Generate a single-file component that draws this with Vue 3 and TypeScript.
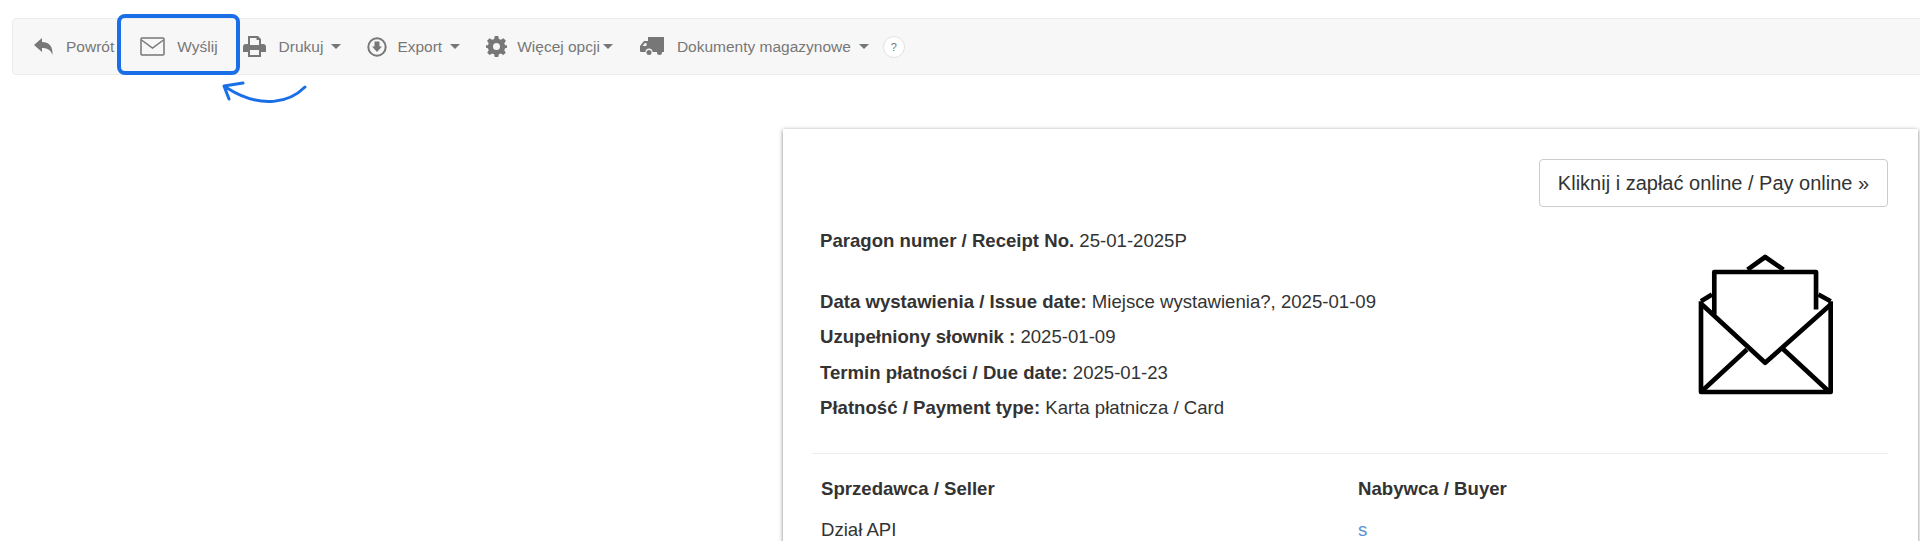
<script setup lang="ts">
interface InfoRow {
  label: string
  value: string
}

const infoRows: InfoRow[] = [
  { label: 'Data wystawienia / Issue date:', value: 'Miejsce wystawienia?, 2025-01-09' },
  { label: 'Uzupełniony słownik :', value: '2025-01-09' },
  { label: 'Termin płatności / Due date:', value: '2025-01-23' },
  { label: 'Płatność / Payment type:', value: 'Karta płatnicza / Card' },
]
</script>

<template>
  <div class="page">
    <nav class="toolbar">
      <a class="tool tool-back">
        <svg class="ico" width="19" height="19" viewBox="0 0 19 19">
          <path d="M0 8 L8 1 V5 C15 5 19 9 18.500 18 C16.500 13 14 11 8 11 V15 Z" />
        </svg>
        <span>Powrót</span>
      </a>
      <a class="tool tool-send">
        <svg class="ico" width="25" height="19" viewBox="0 0 25 19">
          <rect x="1" y="1" width="23" height="17" rx="1" fill="none" stroke="#777" stroke-width="1.500" />
          <path d="M1.500 3 L12.500 11 L23.500 3" fill="none" stroke="#777" stroke-width="1.500" />
        </svg>
        <span>Wyślij</span>
      </a>
      <a class="tool tool-print">
        <svg class="ico" width="23" height="21" viewBox="0 0 23 21">
          <path fill-rule="evenodd" d="M5 0 H15 L18 3 V8 H20 C22 8 23 9 23 11 V16 H18 V21 H5 V16 H0 V11 C0 9 1 8 3 8 H5 Z M7 2 V9 H16 V4 H13.500 V2 Z M7 14 V19 H16 V14 Z" />
        </svg>
        <span>Drukuj</span>
        <i class="caret"></i>
      </a>
      <a class="tool tool-export">
        <svg class="ico" width="20" height="20" viewBox="0 0 20 20">
          <circle cx="10" cy="10" r="8.700" fill="none" stroke="#777" stroke-width="2" />
          <path d="M7.500 4.500 H12.500 V9.500 H15 L10 15 L5 9.500 H7.500 Z" />
        </svg>
        <span>Export</span>
        <i class="caret"></i>
      </a>
      <a class="tool tool-more">
        <svg class="ico" width="21" height="21" viewBox="0 0 24 24">
          <path fill-rule="evenodd" d="M10 0 H14 L14.700 3.400 L17 4.400 L20 2.500 L22.800 5.300 L20.900 8.200 L21.800 10.500 L24 10.500 V13.500 L21.800 14 L20.900 16.200 L22.600 19 L19.800 21.800 L17 20 L14.700 20.900 L14 24 H10 L9.300 20.900 L7 20 L4.200 21.800 L1.400 19 L3.100 16.200 L2.200 14 L0 13.500 V10.500 L2.200 10.500 L3.100 8.200 L1.200 5.300 L4 2.500 L7 4.400 L9.300 3.400 Z M12 8 A4 4 0 1 0 12 16 A4 4 0 1 0 12 8 Z" />
        </svg>
        <span>Więcej opcji</span>
        <i class="caret"></i>
      </a>
      <a class="tool tool-docs">
        <svg class="ico" width="24" height="19" viewBox="0 0 24 19">
          <path fill-rule="evenodd" d="M8 0 H24 V15 H12.500 A3.500 3.500 0 0 0 5.500 15 H1 A1 1 0 0 1 0 14 V9 L4 4 H8 Z M5 6 L2.500 9 H6.500 V6 Z" />
          <circle cx="9" cy="15.500" r="2.500" />
          <circle cx="19.500" cy="15.500" r="2.500" />
        </svg>
        <span>Dokumenty magazynowe</span>
        <i class="caret"></i>
      </a>
      <span class="help">?</span>
    </nav>

    <section class="card">
      <div class="pay-row">
        <button class="pay-btn" type="button">Kliknij i zapłać online / Pay online »</button>
      </div>

      <div class="head">
        <div class="info">
          <p class="receipt"><b>Paragon numer / Receipt No.</b> 25-01-2025P</p>
          <p v-for="row in infoRows" :key="row.label" class="info-row">
            <b>{{ row.label }}</b> {{ row.value }}
          </p>
        </div>
        <svg class="envelope" width="138" height="143" viewBox="170 70 415 430">
          <g fill="none" stroke="#000" stroke-width="14" stroke-linejoin="round">
            <path d="M182 215 V488 H572 V215" />
            <path d="M185 485 L320 360 M565 485 L428 358" />
            <path d="M182 215 L215 195 M572 215 L535 195" />
            <path d="M222 255 V127 H528 V240" />
            <path d="M185 225 L375 400 L572 225" />
            <path d="M322 120 L375 82 L430 120" />
          </g>
        </svg>
      </div>

      <hr class="divider" />

      <div class="parties">
        <div class="party">
          <h4>Sprzedawca / Seller</h4>
          <p>Dział API</p>
        </div>
        <div class="party">
          <h4>Nabywca / Buyer</h4>
          <p class="buyer-link">s</p>
        </div>
      </div>
    </section>

    <!-- annotation over the toolbar -->
    <div class="mark"></div>
    <svg class="arrow" width="100" height="40" viewBox="215 75 100 40">
      <path d="M305 87 C290 102 262 110 227 88 M243 83 L224 86 L229 99" fill="none" stroke="#1a6fe8" stroke-width="3" stroke-linecap="round" stroke-linejoin="round" />
    </svg>
  </div>
</template>

<style scoped>
.page {
  position: relative;
  height: 541px;
  overflow: hidden;
  background: #fff;
  font-family: "Liberation Sans", Arial, sans-serif;
  color: #333;
}

.toolbar {
  display: flex;
  align-items: center;
  box-sizing: border-box;
  height: 57px;
  margin: 18px -10px 0 12px;
  padding-left: 21px;
  background: #f7f7f7;
  border: 1px solid #ececec;
  border-radius: 4px;
  font-size: 15.500px;
  color: #777;
}

.tool {
  display: flex;
  align-items: center;
  white-space: nowrap;
}

.ico {
  fill: #777;
  flex: none;
}

.caret {
  width: 0;
  height: 0;
  margin-left: 8px;
  border-left: 5.500px solid transparent;
  border-right: 5.500px solid transparent;
  border-top: 5.500px solid #777;
}

.tool-back .ico { margin-right: 13px; }
.tool-send { margin-left: 26px; }
.tool-send .ico { margin-right: 12px; }
.tool-print { margin-left: 25px; }
.tool-print .ico { margin-right: 13px; }
.tool-export { margin-left: 26px; }
.tool-export .ico { margin-right: 10px; }
.tool-more { margin-left: 26px; }
.tool-more .ico { margin-right: 10px; }
.tool-more .caret { margin-left: 3px; }
.tool-docs { margin-left: 27px; }
.tool-docs .ico { margin-right: 13px; }

.help {
  box-sizing: border-box;
  width: 22px;
  height: 22px;
  margin-left: 14px;
  border: 1px solid #e2e2e2;
  border-radius: 50%;
  background: #fff;
  font-size: 11px;
  line-height: 20px;
  text-align: center;
}

.card {
  box-sizing: border-box;
  width: 1135px;
  margin: 54px 0 0 783px;
  padding: 30px 30px 40px 37px;
  background: #fff;
  box-shadow: 0 1px 4px rgba(0, 0, 0, 0.5);
}

.pay-row {
  display: flex;
  justify-content: flex-end;
}

.pay-btn {
  height: 48px;
  width: 349px;
  padding: 0;
  background: #fff;
  border: 1px solid #ccc;
  border-radius: 4px;
  font: 20px "Liberation Sans", Arial, sans-serif;
  color: #333;
}

.head {
  display: flex;
  justify-content: space-between;
  align-items: flex-start;
  margin-top: 16px;
}

.info p {
  margin: 0;
  font-size: 18.600px;
  line-height: 35.500px;
}

.info .receipt {
  margin-bottom: 25px;
}

.envelope {
  margin: 30px 53px 0 0;
}

.divider {
  margin: 27px 0 25px -8px;
  border: 0;
  border-top: 1px solid #eee;
}

.parties {
  display: flex;
}

.party {
  flex: none;
  width: 537px;
  margin-left: 1px;
}

.party + .party {
  margin-left: 0;
}

.party h4 {
  margin: 0 0 20px;
  font-size: 18.600px;
  line-height: 20px;
  font-weight: bold;
}

.party p {
  margin: 0;
  font-size: 18.600px;
  line-height: 22px;
}

.buyer-link {
  color: #5b8fd0;
}

.mark {
  position: absolute;
  left: 117px;
  top: 14px;
  box-sizing: border-box;
  width: 123px;
  height: 61px;
  border: 4px solid #1a6fe8;
  border-radius: 8px;
}

.arrow {
  position: absolute;
  left: 215px;
  top: 75px;
}
</style>

<style>
html,
body {
  margin: 0;
  overflow: hidden;
}
</style>
